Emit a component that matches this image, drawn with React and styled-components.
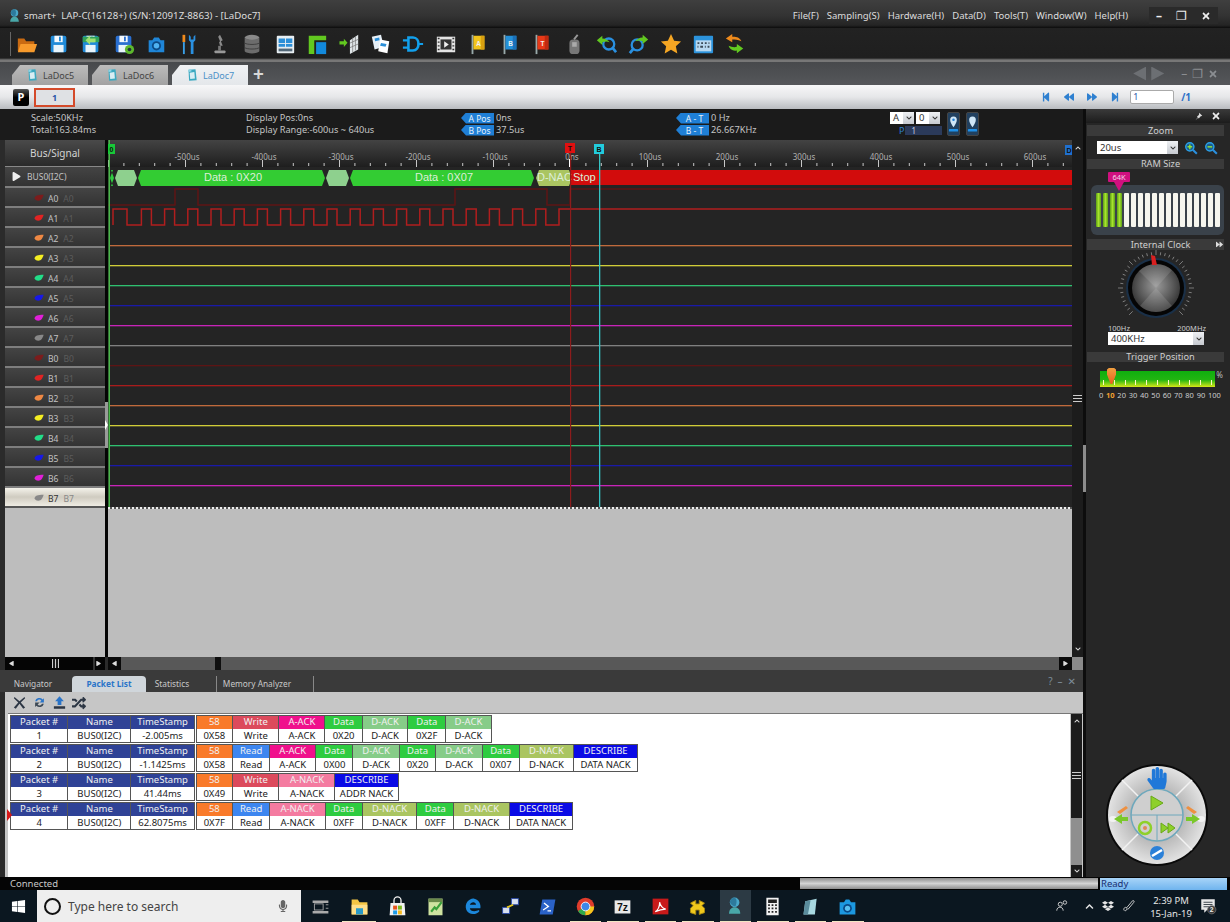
import React from "react";
import styled, { createGlobalStyle } from "styled-components";
import { FaWindows, FaMicrophone, FaDropbox, FaChevronUp, FaChevronDown, FaHandPaper, FaRandom, FaTimes, FaPlay, FaStepBackward, FaStepForward, FaBackward, FaForward } from "react-icons/fa";

const Global = createGlobalStyle`
  html, body { margin: 0; padding: 0; background: #000; }
  * { box-sizing: border-box; }
  body { font-family: "Noto Sans", "DejaVu Sans", sans-serif; font-size: 10px; }
`;

const Page = styled.div`
  width: 1230px;
  height: 922px;
  display: flex;
  flex-direction: column;
  overflow: hidden;
  background: #262626;
  color: #ccc;
`;

/* title + menu */
const TitleBar = styled.div`
  height: 28px;
  flex: none;
  display: flex;
  align-items: center;
  padding: 3px 12px 0 7px;
  background: linear-gradient(#3f3f3f, #333 55%, #242424 90%, #0c0c0c);
`;
const TitleText = styled.div`
  margin-left: 2px;
  color: #ddd;
  font-size: 9.7px;
  white-space: nowrap;
`;
const Menu = styled.div`
  margin-left: auto;
  display: flex;
  gap: 8px;
  color: #ddd;
  font-size: 9.5px;
`;
const WinButtons = styled.div`
  margin-left: 21px;
  width: 69px;
  height: 17px;
  display: flex;
  align-items: center;
  justify-content: space-around;
  background: #2a2a2a;
  color: #eee;
  font-weight: 700;
  font-size: 12px;
`;

const Toolbar = styled.div`
  height: 34px;
  flex: none;
  display: flex;
  align-items: center;
  padding-left: 10px;
  background: linear-gradient(#222 0, #1f1f1f 30px, #777 32px, #777 34px);
`;
const ToolSep = styled.div`
  width: 1px;
  height: 24px;
  margin-bottom: 2px;
  background: #666;
`;
const ToolCell = styled.div`
  width: 32.2px;
  display: flex;
  justify-content: center;
  margin-bottom: 3px;
`;

const TabBar = styled.div`
  height: 23px;
  flex: none;
  display: flex;
  align-items: flex-end;
  padding: 0 12px 0 12px;
  gap: 4px;
  background: linear-gradient(#47494c, #55575a);
`;
const DocTab = styled.div`
  width: 76px;
  height: 20px;
  display: flex;
  align-items: center;
  padding-left: 13px;
  gap: 4px;
  clip-path: polygon(8px 0, 100% 0, 100% 100%, 0 100%, 0 10px);
  background: ${(p) => (p.$active ? "linear-gradient(#f0f2f4,#e4e7ea)" : "linear-gradient(#bcbcbc,#a2a2a2)")};
  color: ${(p) => (p.$active ? "#4a90c8" : "#444")};
  font-size: 9px;
`;
const AddTab = styled.div`
  margin: 0 0 1px 1px;
  color: #d8d8d8;
  font-size: 19px;
  line-height: 20px;
  font-weight: 700;
`;
const TabTools = styled.div`
  margin-left: auto;
  align-self: center;
  display: flex;
  align-items: center;
  gap: 5px;
  color: #8b8e92;
  font-size: 12px;
`;
const TabNavTri = styled.span`
  width: 13px;
  height: 14px;
  background: #6c6f73;
  clip-path: ${(p) =>
    p.$right ? "polygon(0 0, 100% 50%, 0 100%)" : "polygon(100% 0, 0 50%, 100% 100%)"};
`;
const TabMin = styled.span`
  margin-left: 12px;
`;

const PageBar = styled.div`
  height: 24px;
  flex: none;
  display: flex;
  align-items: center;
  padding: 0 39px 0 13px;
  background: linear-gradient(#f7f7f8, #e6e7e9 50%, #b9bcc0);
`;
const PButton = styled.div`
  width: 16px;
  height: 17px;
  border-radius: 2px;
  background: linear-gradient(#555, #000 50%);
  color: #fff;
  font-weight: 700;
  font-size: 11px;
  text-align: center;
  line-height: 16px;
`;
const PageChip = styled.div`
  width: 41px;
  height: 19px;
  margin-left: 5px;
  border: 2px solid #d44a2a;
  background: #dfe1e4;
  color: #2a55a8;
  font-size: 9px;
  font-weight: 700;
  text-align: center;
  line-height: 15px;
`;
const PageNav = styled.div`
  margin-left: auto;
  display: flex;
  align-items: center;
  gap: 13px;
  margin-right: 10px;
  color: #2f80d0;
`;
const PageInput = styled.div`
  width: 44px;
  height: 14px;
  padding-left: 2px;
  border-radius: 2px;
  background: #fff;
  border: 1px solid #aaa;
  color: #2a55a8;
  font-size: 9px;
  line-height: 12px;
`;
const PageTotal = styled.div`
  margin-left: 7px;
  color: #2f70c8;
  font-size: 10px;
  font-weight: 700;
`;

/* main */
const Body = styled.div`
  flex: 1;
  min-height: 0;
  display: flex;
`;
const LeftCol = styled.div`
  width: 1083px;
  display: flex;
  flex-direction: column;
`;

const InfoBar = styled.div`
  height: 31px;
  flex: none;
  display: grid;
  grid-template-columns: 215px 215px 215px 214px auto;
  padding: 3px 0 0 31px;
  background: #1b1b1b;
  color: #c4c4c4;
  font-size: 9.2px;
  line-height: 12px;
`;
const InfoBadgeRow = styled.div`
  display: flex;
  align-items: center;
  height: 12px;
  gap: 2px;
`;
const InfoBadge = styled.div`
  width: 33px;
  height: 11px;
  padding-left: 4px;
  text-align: center;
  background: #1f7fd6;
  color: #e8f2fb;
  font-size: 8.5px;
  line-height: 11px;
  clip-path: polygon(0 50%, 5px 0, 100% 0, 100% 100%, 5px 100%);
`;
const Probe = styled.div`
  display: grid;
  grid-template-columns: auto auto;
  column-gap: 5px;
  justify-content: start;
`;
const ProbeSelects = styled.div`
  display: flex;
  flex-direction: column;
  gap: 2px;
`;
const ProbeRow = styled.div`
  display: flex;
  gap: 2px;
  align-items: center;
`;
const ProbeP = styled.div`
  margin-left: 9px;
  display: flex;
  align-items: center;
  gap: 1px;
  color: #2f80d0;
  font-size: 9px;
  line-height: 9px;
`;
const ProbeField = styled.div`
  width: 37px;
  height: 9px;
  padding-left: 6px;
  background: #2b3a5a;
  color: #c9d2e0;
  font-size: 8px;
  line-height: 9px;
`;
const ProbeButton = styled.div`
  width: 13px;
  height: 24px;
  display: flex;
  justify-content: center;
  align-items: center;
  margin-right: 6px;
  border-radius: 2px;
  background: #21405f;
  border: 1px solid #444;
`;
const ProbeButtons = styled.div`
  display: flex;
`;
const Select = styled.div`
  width: ${(p) => p.$w}px;
  height: ${(p) => p.$h || 13}px;
  display: flex;
  align-items: center;
  justify-content: space-between;
  background: #fff;
  color: #333;
  font-size: 9.5px;
  padding-left: 3px;
`;
const SelectArrow = styled.span`
  width: 11px;
  height: 100%;
  display: flex;
  align-items: center;
  justify-content: center;
  background: linear-gradient(#eef0f3, #c6cad0);
  color: #333;
`;

const Scope = styled.div`
  height: 517px;
  flex: none;
  display: flex;
  background: #bdbdbd;
`;
const SideCol = styled.div`
  width: 105px;
  flex: none;
  padding-left: 5px;
  background: linear-gradient(90deg, #2b2b2b 5px, #bdbdbd 5px);
  display: flex;
  flex-direction: column;
`;
const SideHead = styled.div`
  height: 27px;
  display: flex;
  align-items: center;
  justify-content: center;
  border-bottom: 1px solid #888;
  background: linear-gradient(#4a4a4a, #2a2a2a);
  color: #d4d4d4;
  font-size: 10px;
`;
const SideRow = styled.div`
  height: ${(p) => (p.$bus ? 21 : 20)}px;
  flex: none;
  display: flex;
  align-items: center;
  padding-left: ${(p) => (p.$bus ? 7 : 29)}px;
  padding-top: ${(p) => (p.$bus ? 0 : 3)}px;
  gap: ${(p) => (p.$bus ? 6 : 3)}px;
  border-bottom: 2px solid ${(p) => (p.$active ? "#555" : "#7e7e7e")};
  background: ${(p) =>
    p.$active ? "linear-gradient(#f4f2ea,#cfcbc0 50%,#efece3)" : "linear-gradient(#444,#333)"};
  color: ${(p) => (p.$active ? "#333" : "#c2c2c2")};
  font-size: 8.5px;
`;
const SideDim = styled.span`
  color: ${(p) => (p.$active ? "#888" : "#5c5c5c")};
  margin-left: 2px;
`;
const SideSplit = styled.div`
  position: relative;
  width: 3px;
  flex: none;
  background: #050505;
`;
const SplitHandle = styled.div`
  position: absolute;
  left: 0;
  top: 262px;
  width: 3px;
  height: 46px;
  background: #9a9a9a;
  &::after {
    content: "";
    position: absolute;
    top: 18px;
    left: 0;
    border-left: 3px solid #fff;
    border-top: 5px solid transparent;
    border-bottom: 5px solid transparent;
  }
`;
const CanvasCol = styled.div`
  width: 964px;
  flex: none;
  display: flex;
  flex-direction: column;
`;
const DottedEdge = styled.div`
  height: 2px;
  flex: none;
  background: repeating-linear-gradient(90deg, #eee 0 2px, #555 2px 4px);
`;
const Wave = styled.svg`
  display: block;
  flex: none;
`;
const RulerText = styled.text`
  fill: #b0b0b0;
  font-size: 8px;
  font-family: "Noto Sans", sans-serif;
  text-anchor: middle;
`;
const BusText = styled.text`
  fill: #dcefd8;
  font-size: 11px;
  font-family: "Liberation Sans", sans-serif;
  text-anchor: ${(p) => p.$anchor || "middle"};
`;
const FlagText = styled.text`
  fill: ${(p) => p.$fill || "#111"};
  font-size: ${(p) => p.$size || 7}px;
  font-weight: 700;
  font-family: "Liberation Sans", sans-serif;
  text-anchor: middle;
`;
const VScroll = styled.div`
  width: 11px;
  flex: none;
  display: flex;
  flex-direction: column;
  align-items: center;
  justify-content: space-between;
  padding: 5px 0;
  background: #1c1c1c;
  color: #ddd;
`;
const GripLines = styled.div`
  width: 9px;
  height: 7px;
  border-top: 1px solid #ccc;
  border-bottom: 1px solid #ccc;
  background: linear-gradient(#1c1c1c 2px, #ccc 2px, #ccc 3px, #1c1c1c 3px);
`;
const HGrip = styled(GripLines)`
  transform: rotate(90deg);
`;
const LeftTri = styled(FaPlay)`
  transform: scaleX(-1);
`;
const HScrollRow = styled.div`
  height: 13px;
  flex: none;
  display: flex;
  background: #2b2b2b;
`;
const HLeft = styled.div`
  width: 100px;
  margin-left: 5px;
  display: flex;
  justify-content: space-between;
  align-items: center;
  padding: 0 4px;
  background: linear-gradient(90deg, #050505 88px, #333 88px, #333 90px, #050505 90px);
  color: #ddd;
`;
const HTrack = styled.div`
  width: 964px;
  margin-left: 3px;
  display: flex;
  align-items: center;
  background: #585858;
`;
const HArrow = styled.div`
  width: 13px;
  height: 100%;
  display: flex;
  align-items: center;
  justify-content: center;
  background: #0a0a0a;
  color: #ddd;
`;
const HKnob = styled.div`
  width: 6px;
  height: 100%;
  margin-left: 94px;
  background: #0f0f0f;
`;
const HSpace = styled.div`
  flex: 1;
`;
const HEnd = styled.div`
  flex: 1;
  background: #8a8a8a;
`;

/* bottom panel */
const Bottom = styled.div`
  flex: 1;
  display: flex;
  flex-direction: column;
  background: linear-gradient(90deg, #2b2b2b 5px, #c6c6c6 5px);
`;
const BottomTabs = styled.div`
  height: 22px;
  flex: none;
  display: flex;
  align-items: flex-end;
  padding-left: 5px;
  background: #3a3a3a;
`;
const BottomTab = styled.div`
  width: ${(p) => p.$w}px;
  height: 16px;
  padding-right: ${(p) => p.$pr || 0}px;
  text-align: center;
  font-size: 8.3px;
  line-height: 15px;
  border-right: ${(p) => (p.$sep ? "1px solid #888" : "none")};
  border-radius: ${(p) => (p.$active ? "4px 4px 0 0" : "0")};
  background: ${(p) => (p.$active ? "#d0d6db" : "transparent")};
  color: ${(p) => (p.$active ? "#2a74c8" : "#c8c8c8")};
  font-weight: ${(p) => (p.$active ? 700 : 400)};
`;
const PanelTools = styled.div`
  margin-left: auto;
  align-self: center;
  display: flex;
  gap: 5px;
  padding-right: 7px;
  color: #7d8d99;
  font-size: 10px;
`;
const BottomTools = styled.div`
  height: 21px;
  flex: none;
  display: flex;
  align-items: center;
  gap: 5px;
  padding-left: 12px;
  color: #2c3644;
`;
const ListFrame = styled.div`
  flex: 1;
  min-height: 0;
  display: flex;
  margin-left: 8px;
  border-top: 1px solid #777;
`;
const PacketList = styled.div`
  position: relative;
  flex: 1;
  display: flex;
  flex-direction: column;
  gap: 1px;
  padding: 1px 0 0 2px;
  background: #fff;
`;
const PacketRow = styled.div`
  display: flex;
  gap: 1px;
`;
const PacketTable = styled.div`
  display: flex;
  border: 1px solid #555;
  border-width: 1px 0 1px 1px;
`;
const PacketCol = styled.div`
  width: ${(p) => p.$w}px;
  border-right: 1px solid #555;
`;
const HeadCell = styled.div`
  height: 13px;
  text-align: center;
  font-size: 9.5px;
  line-height: 12px;
  color: #f0f0f0;
  background: ${(p) => p.$bg};
  white-space: nowrap;
  overflow: hidden;
`;
const ValueCell = styled.div`
  height: 13px;
  text-align: center;
  font-size: 9.5px;
  line-height: 13px;
  color: #222;
  background: #fff;
  white-space: nowrap;
  overflow: hidden;
`;
const RowFlag = styled.div`
  position: absolute;
  left: -1px;
  top: 95px;
  border-left: 5px solid #d81818;
  border-top: 6px solid transparent;
  border-bottom: 6px solid transparent;
`;
const ListScroll = styled.div`
  width: 13px;
  flex: none;
  display: flex;
  flex-direction: column;
  padding: 0 1px;
  background: #c6c6c6;
`;
const ListThumb = styled.div`
  height: 104px;
  padding-top: 4px;
  display: flex;
  flex-direction: column;
  align-items: center;
  gap: 48px;
  background: #1c1c1c;
  color: #ddd;
`;
const ListTrack = styled.div`
  flex: 1;
  background: #8f8f8f;
`;
const ListEnd = styled.div`
  height: 12px;
  display: flex;
  justify-content: center;
  align-items: center;
  background: #1c1c1c;
  color: #ddd;
`;

/* right panel */
const RightPanel = styled.div`
  width: 147px;
  flex: none;
  display: flex;
  flex-direction: column;
  border-left: 3px solid #0d0d0d;
  background: #262626;
  position: relative;
`;
const PanelGrip = styled.div`
  position: absolute;
  left: -3px;
  top: 336px;
  width: 3px;
  height: 47px;
  background: #8c8c8c;
`;
const PanelHead = styled.div`
  height: 14px;
  flex: none;
  display: flex;
  align-items: center;
  justify-content: flex-end;
  gap: 8px;
  padding-right: 9px;
  background: linear-gradient(#3a3a3a, #1c1c1c);
  color: #eee;
`;
const SectionTitle = styled.div`
  height: ${(p) => p.$h || 10}px;
  margin: ${(p) => p.$mt}px 6px 0 1px;
  padding-left: 10px;
  flex: none;
  position: relative;
  background: #3a3a3a;
  color: #d0d0d0;
  font-size: 9.2px;
  line-height: ${(p) => p.$h || 10}px;
  text-align: center;
`;
const TitleArrow = styled.span`
  position: absolute;
  right: 1px;
  top: 0;
  display: flex;
  height: 100%;
  align-items: center;
  color: #ddd;
`;
const ZoomRow = styled.div`
  height: 13px;
  flex: none;
  margin: 5px 0 0 11px;
  display: flex;
  align-items: center;
  gap: 6px;
`;
const RamBox = styled.div`
  position: relative;
  width: 133px;
  height: 50px;
  flex: none;
  margin: 16px 0 0 5px;
  padding: 8px 5px;
  display: flex;
  gap: 2px;
  border-radius: 6px;
  background: #3a424a;
`;
const RamBar = styled.div`
  width: 5px;
  flex: none;
  border-radius: 1px;
  background: ${(p) => (p.$on ? "linear-gradient(90deg,#5da016,#a6e22e,#5da016)" : "#f6f6ee")};
`;
const RamBadge = styled.div`
  position: absolute;
  top: -13px;
  left: 17px;
  width: 22px;
  height: 10px;
  border-radius: 1px;
  background: #d0107f;
  color: #f5d5e8;
  font-size: 7.5px;
  line-height: 10px;
  text-align: center;
  &::after {
    content: "";
    position: absolute;
    top: 10px;
    left: 6px;
    border-top: 9px solid #d0107f;
    border-left: 5px solid transparent;
    border-right: 5px solid transparent;
  }
`;
const KnobWrap = styled.div`
  height: 74px;
  flex: none;
  padding-left: 28px;
`;
const KnobLabels = styled.div`
  width: 98px;
  height: 8px;
  margin-left: 22px;
  display: flex;
  justify-content: space-between;
  color: #ccc;
  font-size: 7.5px;
  line-height: 8px;
`;
const ClockSelect = styled.div`
  margin-left: 22px;
`;
const TriggerBar = styled.div`
  position: relative;
  width: 115px;
  height: 16px;
  flex: none;
  margin: 9px 0 0 14px;
  display: flex;
  align-items: flex-end;
  justify-content: space-between;
  padding: 0 3px 2px;
  background: linear-gradient(#0fae0f, #22b511 55%, #d8e818);
`;
const TriggerTick = styled.span`
  width: 1px;
  height: 5px;
  background: #fff8c0;
`;
const TriggerMark = styled.div`
  position: absolute;
  left: 7px;
  top: -3px;
  width: 9px;
  height: 16px;
  background: linear-gradient(#f0a040, #e8601c);
  clip-path: polygon(0 10%, 20% 0, 80% 0, 100% 10%, 100% 40%, 60% 100%, 40% 100%, 0 40%);
`;
const TriggerPct = styled.span`
  position: absolute;
  right: -8px;
  top: -2px;
  color: #bbb;
  font-size: 8px;
`;
const TriggerScale = styled.div`
  width: 122px;
  margin: 2px 0 0 13px;
  display: flex;
  justify-content: space-between;
  font-size: 7.5px;
  line-height: 12px;
  color: #ccc;
`;
const TriggerNum = styled.span`
  color: ${(p) => (p.$hot ? "#f0a030" : "#ccc")};
  font-weight: ${(p) => (p.$hot ? 700 : 400)};
`;
const WheelWrap = styled.div`
  margin: auto 0 10px 19px;
  height: 104px;
  flex: none;
`;

/* status + taskbar */
const StatusBar = styled.div`
  height: 13px;
  flex: none;
  display: flex;
  align-items: center;
  padding-left: 10px;
  background: #050505;
  color: #c8c8c8;
  font-size: 9.5px;
`;
const Progress = styled.div`
  width: 298px;
  height: 11px;
  margin-left: auto;
  background: linear-gradient(#8e8e8e, #d4d4d4 50%, #8e8e8e);
`;
const ReadyBox = styled.div`
  width: 127px;
  height: 12px;
  margin: 0 3px 0 2px;
  padding-left: 1px;
  background: linear-gradient(#a8d4f8, #6fb4ee);
  color: #1a2f70;
  font-size: 9.5px;
  line-height: 12px;
`;
const Taskbar = styled.div`
  height: 32px;
  flex: none;
  display: flex;
  align-items: center;
  background: #0b1720;
  color: #e8e8e8;
`;
const StartButton = styled.div`
  width: 37px;
  display: flex;
  justify-content: center;
  color: #fff;
`;
const SearchBox = styled.div`
  width: 264px;
  height: 32px;
  display: flex;
  align-items: center;
  padding: 0 12px 0 7px;
  background: #eeeeee;
  color: #444;
  font-size: 12px;
`;
const SearchRing = styled.span`
  width: 17px;
  height: 17px;
  margin-right: 7px;
  border-radius: 50%;
  border: 2.5px solid #111;
`;
const SearchMic = styled.span`
  margin-left: auto;
  display: flex;
  color: #666;
`;
const TaskIcon = styled.div`
  width: ${(p) => p.$w || 37.5}px;
  height: 32px;
  flex: none;
  display: flex;
  align-items: center;
  justify-content: center;
  background: ${(p) => (p.$active ? "#2c3a44" : "transparent")};
  box-shadow: ${(p) => (p.$open ? "inset 0 -1px 0 0 #f2e6c4" : "none")};
  background-clip: padding-box;
  border-left: 3px solid transparent;
  border-right: 3px solid transparent;
`;
const Tray = styled.div`
  margin-left: auto;
  display: flex;
  align-items: center;
  gap: 8px;
  padding-right: 13px;
  color: #e6e6e6;
`;
const TrayPerson = styled.span`
  display: flex;
  margin-right: 8px;
`;
const Clock = styled.div`
  width: 52px;
  margin: 2px -6px 0 1px;
  text-align: center;
  font-size: 9.5px;
  line-height: 13px;
`;

/* ---- drawn icons ---- */
const Ico = ({ s = 24, children, vb = "0 0 24 24" }) => (
  <svg width={s} height={s} viewBox={vb}>{children}</svg>
);
const Floppy = ({ extra, c = "#1f8ad8" }) => (
  <>
    <rect x="3" y="3" width="17" height="18" rx="2" fill={c} />
    <rect x="7" y="3" width="9" height="7" fill="#f4f8fb" />
    <rect x="12" y="4" width="2" height="5" fill={c} />
    <rect x="6" y="13" width="11" height="8" fill="#e8f4fb" />
    {extra}
  </>
);
const FlagIcon = ({ c, dark, l, pole = "#9aa" }) => (
  <>
    <rect x="5" y="2" width="2" height="21" fill={pole} />
    <path d={`M7 3h12v15H7z`} fill={c} />
    <path d="M15 3h4v15h-4z" fill={dark} />
    <FlagText x="12.5" y="14" $fill="#f0f0f0">{l}</FlagText>
  </>
);
const toolIcons = [
  <><path d="M2 20V6h7l2 3h9v3H7L4 20z" fill="#c96a12" /><path d="M5 12h18l-3 9H2z" fill="#f79a2c" /></>,
  <Floppy />,
  <Floppy extra={<><path d="M3 4h18v6H3z" fill="#2fa05a" /><path d="M6 8l5-5v3h6v4h-6v3z" fill="#9fe070" /></>} c="#1f8ad8" />,
  <Floppy c="#2a6fd0" extra={<><circle cx="18" cy="18" r="5" fill="#5db82c" /><circle cx="18" cy="18" r="2" fill="#20303a" /></>} />,
  <><path d="M4 8h4l2-3h5l2 3h4v13H4z" fill="#1f86d8" /><circle cx="12.5" cy="14" r="5" fill="#0c4a86" /><circle cx="12.5" cy="14" r="3" fill="#4fb2f2" /></>,
  <><rect x="6" y="2" width="3" height="8" fill="#f08a1c" /><rect x="6.5" y="10" width="2" height="13" fill="#3aa0e8" /><path d="M13 2v6l2 2v13h3V10l2-2V2l-2 2v3h-3V4z" fill="#2a90e0" /></>,
  <><path d="M12 2l3 6-2 1 2 5h-3l-1-4 1-1-2-5z" fill="#8a8a8a" /><rect x="10" y="14" width="3" height="5" fill="#777" /><rect x="6" y="19" width="12" height="3" rx="1" fill="#999" /></>,
  <><ellipse cx="12" cy="5" rx="8" ry="3" fill="#8a8a8a" /><path d="M4 5v15c2 3 14 3 16 0V5c-2 3-14 3-16 0z" fill="#6c6c6c" /><path d="M4 11c3 2 13 2 16 0M4 16c3 2 13 2 16 0" stroke="#3c3c3c" fill="none" /></>,
  <><rect x="3" y="3" width="19" height="19" rx="1" fill="#e7eef2" /><rect x="5" y="6" width="7" height="5" fill="#2c8fd8" /><rect x="13" y="6" width="7" height="5" fill="#2c8fd8" /><rect x="5" y="12" width="7" height="3" fill="#2c8fd8" /><rect x="13" y="12" width="7" height="3" fill="#2c8fd8" /><rect x="5" y="17" width="15" height="3" fill="#536878" /></>,
  <><path d="M3 3h19v5H9v15H3z" fill="#62c820" /><rect x="11" y="10" width="11" height="13" fill="#1289dc" /></>,
  <><path d="M2 11h6V8l5 5-5 5v-3H2z" fill="#62c820" transform="translate(0 -1) scale(.8 .9)" /><path d="M13 8l9-6v16l-9 5z" fill="#dfe5e8" /><path d="M16 5v16M19 4v15M13 11l9-4M13 16l9-4" stroke="#777" fill="none" strokeWidth=".8" /></>,
  <><path d="M2 4l10-2 3 13-10 3z" fill="#e6f0f8" /><path d="M11 7l10 2-2 13-10-2z" fill="#fff" /><path d="M12 11l6 1-1 3-6-1z" fill="#2c8fd8" /><path d="M5 6l5-1 .5 3-5 1z" fill="#2c8fd8" /></>,
  <><path d="M1 8h6M1 16h6M17 12h6" stroke="#12a0ec" strokeWidth="2.4" /><path d="M7 5h5c8 0 8 14 0 14H7z" fill="none" stroke="#12a0ec" strokeWidth="2.8" /></>,
  <><rect x="2" y="4" width="20" height="17" fill="#e4e4e4" /><rect x="6" y="7" width="12" height="11" fill="#333" /><path d="M10 9l5 3.5-5 3.5z" fill="#eee" /><path d="M3 6h2M3 10h2M3 14h2M3 18h2M19 6h2M19 10h2M19 14h2M19 18h2" stroke="#333" strokeWidth="1.4" /></>,
  <FlagIcon c="#f2c41c" dark="#d8a010" l="A" />,
  <FlagIcon c="#2490d8" dark="#1a70b8" l="B" />,
  <FlagIcon c="#e83a18" dark="#c02a10" l="T" />,
  <><rect x="7" y="7" width="11" height="16" rx="4" fill="#777" /><rect x="10" y="10" width="5" height="5" fill="#aaa" /><path d="M12 7l4-5" stroke="#999" strokeWidth="2" /></>,
  <><circle cx="15" cy="12" r="6" fill="none" stroke="#2a90e0" strokeWidth="2.5" /><path d="M19 16l4 5" stroke="#2a90e0" strokeWidth="3" /><path d="M2 8l6-5v3c4 0 6 2 8 4-3-1-5-1-8 0v3z" fill="#62c820" /></>,
  <><circle cx="10" cy="13" r="6" fill="none" stroke="#2a90e0" strokeWidth="2.5" /><path d="M6 17l-4 5" stroke="#2a90e0" strokeWidth="3" /><path d="M22 7l-6-5v3c-4 0-6 2-8 4 3-1 5-1 8 0v3z" fill="#62c820" /></>,
  <path d="M12 1l3.4 7.4 7.6.8-5.7 5.2 1.6 8-6.9-4.1L5.100 22.400l1.600-8L1 9.200l7.600-.8z" fill="#f5a623" />,
  <><rect x="2" y="3" width="21" height="19" rx="1" fill="#2c93dc" /><rect x="4" y="8" width="17" height="12" fill="#b8d8f0" /><path d="M6 11h2M10 11h2M14 11h2M18 11h1M6 15h1M9 15h3M14 15h1M17 15h2" stroke="#3a4a58" strokeWidth="2" /></>,
  <><path d="M5 9c2-5 7-5 10-5V1l7 5-7 4V7c-3 0-6 0-10 2z" fill="#ee8a1c" transform="matrix(-1 0 0 1 24 0)" /><path d="M5 14c3 1 6 2 9 1v-3l7 5-7 5v-3c-4 1-8-1-9-5z" fill="#62c820" /></>,
];

const AppLogo = ({ s = 16 }) => (
  <Ico s={s}>
    <circle cx="12" cy="8" r="6" fill="#49a7c8" />
    <path d="M12 2c3 2 3 6 1 11-4 0-7-4-7-6 1-3 4-5 6-5z" fill="#2d7a9c" />
    <path d="M5 22c0-5 3-8 7-8s7 3 7 8z" fill="#49a7a8" />
  </Ico>
);
const DocIcon = () => (
  <Ico s={14}>
    <path d="M6 3l12-1 2 19-13 1z" fill="#3aa8c0" />
    <path d="M8 8l8-1 1 11-8 1z" fill="#d8eef4" />
    <path d="M6 3l5-1v4l-5 1z" fill="#8ed4e4" />
  </Ico>
);
const ZoomLens = ({ plus }) => (
  <Ico s={14}>
    <circle cx="10" cy="10" r="7" fill="#1c5d8c" stroke="#2aa0e8" strokeWidth="2.5" />
    <path d="M15 15l7 7" stroke="#2a90e0" strokeWidth="3.500" />
    <path d={plus ? "M6 10h8M10 6v8" : "M6 10h8"} stroke="#8fe03a" strokeWidth="2.500" />
  </Ico>
);
const Leaf = ({ c }) => (
  <Ico s={11}>
    <path d="M1 12c1-6 7-8 20-8-2 7-5 13-12 13-3 0-6-2-8-5z" fill={c} />
  </Ico>
);
const PinBtn = ({ solid }) => (
  <Ico s={20} vb="0 0 13 24">
    <path d="M6.500 3c3 0 4 2 4 4 0 3-2 6-4 9-2-3-4-6-4-9 0-2 1-4 4-4z" fill="#cfe6f7" />
    {!solid && <circle cx="6.500" cy="7" r="1.500" fill="#1f7fd6" />}
    <rect x="1" y="18" width="11" height="3" rx="1" fill="#1f90e8" />
  </Ico>
);

const channelColors = ["#5d1414", "#a81c1c", "#c06a3c", "#d0cc38", "#2fc070", "#1a1aa8", "#c824b8", "#808080"];
const leafColors = ["#7c1c1c", "#e02424", "#ee8844", "#f4ee22", "#22dd88", "#1818e8", "#e020d8", "#888888"];
const channels = ["A", "B"].flatMap((b) =>
  [0, 1, 2, 3, 4, 5, 6, 7].map((i) => ({ name: `${b}${i}`, wave: channelColors[i], leaf: leafColors[i] }))
);

const SX = 108;
const tickXs = Array.from({ length: 81 }, (_, i) => 108 + i * 15.4).filter((x) => x < 1072);
const labels = [
  ["-500us", 187], ["-400us", 264], ["-300us", 341], ["-200us", 418], ["-100us", 495], ["0ns", 572],
  ["100us", 650], ["200us", 727], ["300us", 804], ["400us", 881], ["500us", 958], ["600us", 1035],
];

const a1Path = () => {
  let d = "M113 225V209H127V225";
  for (let x = 141.4; x < 558; x += 23.2) {
    d += `H${x.toFixed(1)}V209H${(x + 10).toFixed(1)}V225`;
  }
  return d + "H559V209H1072";
};
const hex = (a, b) => `${a},178 ${a + 3},170 ${b - 3},170 ${b},178 ${b - 3},186 ${a + 3},186`;

const Waveform = () => (
  <Wave width="964" height="367" viewBox={`${SX} 140 964 367`}>
    <defs>
      <linearGradient id="ruler" x1="0" y1="0" x2="0" y2="1">
        <stop offset="0" stopColor="#434343" />
        <stop offset="1" stopColor="#1e1e1e" />
      </linearGradient>
    </defs>
    <rect x="108" y="140" width="964" height="367" fill="#242424" />
    <rect x="108" y="140" width="964" height="27" fill="url(#ruler)" />
    {tickXs.map((x, i) => (
      <rect key={i} x={x} y={i % 5 === 0 ? 160 : 163} width="1" height={i % 5 === 0 ? 7 : 3} fill="#c8c8c8" />
    ))}
    <rect x="569" y="159" width="2" height="8" fill="#fff" />
    {labels.map(([t, x]) => <RulerText key={t} x={x} y="160">{t}</RulerText>)}

    <polygon points={hex(110, 114)} fill="#2ecc40" />
    <polygon points={hex(115, 137)} fill="#8ed08e" />
    <polygon points={hex(138, 325)} fill="#33cc33" />
    <polygon points={hex(326, 349)} fill="#8ed08e" />
    <polygon points={hex(350, 534)} fill="#33cc33" />
    <polygon points={hex(536, 572)} fill="#aac561" />
    <rect x="570" y="170" width="502" height="15" fill="#d20c0c" />
    <BusText x="233" y="181">Data : 0X20</BusText>
    <BusText x="444" y="181">Data : 0X07</BusText>
    <BusText x="537" y="181" $anchor="start">D-NAC</BusText>
    <BusText x="573" y="181" $anchor="start">Stop</BusText>

    <path d="M108 205H175V189H198V205H455V189H547V205H570V189H1072" fill="none" stroke="#5d1414" strokeWidth="1.5" />
    <path d={a1Path()} fill="none" stroke="#b01e1e" strokeWidth="1.5" />
    {channels.slice(2, 15).map((c, i) => (
      <rect key={c.name} x="109" y={245 + i * 20} width="963" height="1.300" fill={c.wave} />
    ))}

    <rect x="108.500" y="140" width="1.500" height="367" fill="#4ab84a" />
    <rect x="570" y="153" width="1.200" height="354" fill="#8c1c1c" />
    <rect x="599" y="154" width="1.300" height="353" fill="#35c4c4" />

    <rect x="108" y="144" width="7" height="10" fill="#18c838" />
    <FlagText x="111.500" y="152">0</FlagText>
    <rect x="565" y="143" width="10" height="10" fill="#e01010" />
    <FlagText x="570" y="151">T</FlagText>
    <rect x="594" y="144" width="10" height="10" fill="#22ccdd" />
    <FlagText x="599" y="152">B</FlagText>
    <rect x="1065" y="145" width="7" height="10" fill="#1f70d0" />
    <FlagText x="1069" y="153">D</FlagText>
  </Wave>
);

const Knob = () => {
  const ticks = Array.from({ length: 37 }, (_, i) => -135 + i * 7.5);
  return (
    <svg width="84" height="78" viewBox="0 0 84 78">
      <defs>
        <radialGradient id="metal" cx="50%" cy="45%" r="62%">
          <stop offset="0" stopColor="#9a9a9a" />
          <stop offset="0.55" stopColor="#5c5c5c" />
          <stop offset="1" stopColor="#262626" />
        </radialGradient>
      </defs>
      {ticks.map((a) => (
        <line key={a} x1="42" y1="5" x2="42" y2={a % 45 === 0 ? 0 : 2} stroke="#8c8c8c" strokeWidth=".8" transform={`rotate(${a} 42 38)`} />
      ))}
      <circle cx="42" cy="38" r="30" fill="#1a3048" />
      <circle cx="42" cy="38" r="28" fill="#050505" />
      <circle cx="42" cy="38" r="24" fill="url(#metal)" />
      <path d="M42 38L25 21A24 24 0 0158 20zM42 38L58 56A24 24 0 0126 56z" fill="#c8c8c8" fillOpacity=".18" />
      <path d="M37 5l4 1 2 9-5 0z" fill="#d82020" />
    </svg>
  );
};

const Wheel = () => (
  <svg width="104" height="104" viewBox="0 0 104 104">
    <defs>
      <radialGradient id="disc" cx="50%" cy="50%" r="52%">
        <stop offset="0.5" stopColor="#b8b8b8" />
        <stop offset="1" stopColor="#e6e6e6" />
      </radialGradient>
    </defs>
    <circle cx="52" cy="52" r="51" fill="#0a0a0a" />
    <circle cx="52" cy="52" r="49" fill="url(#disc)" />
    <path d="M17 17L34 34M87 17L70 34M17 87L34 70M87 87L70 70" stroke="#f2f2f2" strokeWidth="1.500" />
    <circle cx="52" cy="52" r="26" fill="#cfcfcf" stroke="#6ea8bc" strokeWidth="1.500" />
    <path d="M26 52H78M52 52V78" stroke="#6ea8bc" strokeWidth="1" />
    <path d="M46 33l12 7-12 7z" fill="#8ed02a" stroke="#68a818" />
    <path d="M56 60l7 5-7 5zM63 60l7 5-7 5z" fill="#8ed02a" stroke="#68a818" />
    <circle cx="40" cy="65" r="6" fill="none" stroke="#8ed02a" strokeWidth="2.500" />
    <circle cx="40" cy="65" r="2" fill="#e08858" />
    <circle cx="52" cy="90" r="7" fill="#2a80d8" />
    <path d="M47 93l10-6" stroke="#fff" strokeWidth="2.500" />
    <FaHandPaper x="41" y="4" size="22" color="#1f78d8" />
    <ellipse cx="8" cy="56" rx="4" ry="3" fill="#f2f2f2" />
    <path d="M9 56l8-5v3h6v4h-6v3z" fill="#7ac82a" />
    <path d="M12 49l9-6 2 2-8 6z" fill="#ee9040" />
    <ellipse cx="96" cy="56" rx="4" ry="3" fill="#f2f2f2" />
    <path d="M95 56l-8-5v3h-6v4h6v3z" fill="#7ac82a" />
    <path d="M92 49l-9-6-2 2 8 6z" fill="#ee9040" />
  </svg>
);

const LEFT_HEAD = "#2f4296";
const kinds = {
  addr: { head: "58", bg: "#f97a2a" },
  write: { head: "Write", bg: "#dc4a5c" },
  read: { head: "Read", bg: "#3d86f0" },
  aack: { head: "A-ACK", bg: "#f0108c" },
  anack: { head: "A-NACK", bg: "#f47ba0" },
  data: { head: "Data", bg: "#2ecc40" },
  dack: { head: "D-ACK", bg: "#86cc88" },
  dnack: { head: "D-NACK", bg: "#aac561" },
  desc: { head: "DESCRIBE", bg: "#0a0ae6" },
};
const packets = [
  {
    id: 1, time: "-2.005ms",
    cells: [["addr", "0X58", 36.6], ["write", "Write", 46.3], ["aack", "A-ACK", 45.9], ["data", "0X20", 37.5], ["dack", "D-ACK", 45.4], ["data", "0X2F", 38], ["dack", "D-ACK", 45.5]],
  },
  {
    id: 2, time: "-1.1425ms",
    cells: [["addr", "0X58", 36.6], ["read", "Read", 37], ["aack", "A-ACK", 46.3], ["data", "0X00", 37], ["dack", "D-ACK", 46.3], ["data", "0X20", 36.6], ["dack", "D-ACK", 46.3], ["data", "0X07", 37], ["dnack", "D-NACK", 54.7], ["desc", "DATA NACK", 63.5]],
  },
  {
    id: 3, time: "41.44ms",
    cells: [["addr", "0X49", 36.6], ["write", "Write", 46.3], ["anack", "A-NACK", 56], ["desc", "ADDR NACK", 63.1]],
  },
  {
    id: 4, time: "62.8075ms",
    cells: [["addr", "0X7F", 36.6], ["read", "Read", 37], ["anack", "A-NACK", 55.6], ["data", "0XFF", 37], ["dnack", "D-NACK", 54.7], ["data", "0XFF", 36.6], ["dnack", "D-NACK", 56], ["desc", "DATA NACK", 63.1]],
  },
];

const Column = ({ w, head, value, bg }) => (
  <PacketCol $w={w}>
    <HeadCell $bg={bg}>{head}</HeadCell>
    <ValueCell>{value}</ValueCell>
  </PacketCol>
);

const taskIcons = [
  { w: 38, icon: <><path d="M3 5h18v3H3zM3 17h18v3H3z" fill="#aaa" /><rect x="5" y="9" width="10" height="7" fill="none" stroke="#aaa" /><path d="M18 10h3M18 14h3" stroke="#aaa" /></> },
  { w: 40, open: true, icon: <><path d="M3 4h7l2 3h9v14H3z" fill="#f4c644" /><rect x="3" y="10" width="18" height="11" fill="#ffe08a" /><rect x="8" y="14" width="8" height="7" fill="#2a9ac8" /></> },
  { icon: <><path d="M4 8h16l1 14H3z" fill="#f2f2f2" /><path d="M8 9V5a4 4 0 018 0v4" fill="none" stroke="#f2f2f2" strokeWidth="1.500" /><rect x="7" y="11" width="4.500" height="4.500" fill="#e8541c" /><rect x="12.500" y="11" width="4.500" height="4.500" fill="#7ab81c" /><rect x="7" y="16.500" width="4.500" height="4.500" fill="#1c9ae8" /><rect x="12.500" y="16.500" width="4.500" height="4.500" fill="#f4b81c" /></> },
  { icon: <><rect x="4" y="3" width="16" height="19" fill="#cfe3a0" /><rect x="4" y="3" width="16" height="4" fill="#6a8a4a" /><path d="M7 18l4-5 2 2 6-8" fill="none" stroke="#3aa03a" strokeWidth="2.500" /></> },
  { icon: <path d="M20 17c-2 4-12 6-15-1C2 8 9 2 14 3c5 1 8 6 7 11H9c0 4 7 4 10 2zM9 10h7c0-4-6-4-7 0z" fill="#1c88dc" /> },
  { icon: <><rect x="13" y="3" width="8" height="7" fill="#d8e0f0" stroke="#2848a8" /><rect x="3" y="13" width="8" height="7" fill="#d8e0f0" stroke="#2848a8" /><path d="M8 13l7-3" stroke="#e8c81c" strokeWidth="2" /></> },
  { icon: <><path d="M6 4h15l-3 17H3z" fill="#2a62c8" /><path d="M8 8l5 4-6 4M12 17h4" fill="none" stroke="#fff" strokeWidth="1.500" /></> },
  { open: true, icon: <><circle cx="12" cy="12" r="10" fill="#e03c2c" /><path d="M12 12L3.500 17A10 10 0 0012 22z" fill="#2eaa4a" /><path d="M12 12h10a10 10 0 01-10 10z" fill="#f4c81c" /><circle cx="12" cy="12" r="5" fill="#3c88e8" stroke="#fff" /></> },
  { open: true, icon: <><rect x="3" y="5" width="18" height="15" fill="#e8e8e8" /><FlagText x="12" y="17" $size={12}>7z</FlagText></> },
  { open: true, icon: <><rect x="3" y="3" width="18" height="18" fill="#c81a1a" /><path d="M6 18c3-2 5-7 5-11 1 5 3 7 7 8-4 0-8 1-12 3z" fill="none" stroke="#fff" strokeWidth="1.300" /></> },
  { open: true, icon: <><path d="M4 8l6-3v4h4V5l6 3-3 3 3 3v5l-6 2v-5h-4v5l-6-2v-5l3-3z" fill="#f0c81c" stroke="#a88810" /></> },
  { open: true, active: true, icon: <AppLogo s={22} /> },
  { open: true, icon: <><rect x="5" y="2" width="14" height="20" fill="#f2f2f2" /><rect x="7" y="4" width="10" height="4" fill="#222" /><path d="M7 10.500h2M11 10.500h2M15 10.500h2M7 14h2M11 14h2M15 14h2M7 18h2M11 18h2M15 18h2" stroke="#222" strokeWidth="2" /></> },
  { open: true, icon: <><path d="M6 6l13-3-2 18H4z" fill="#a8d8e0" /><path d="M6 6l6-1-3 16H4z" fill="#5a8c9c" /></> },
  { open: true, icon: <><path d="M3 7h5l2-3h4l2 3h5v14H3z" fill="#1c98e0" /><circle cx="12" cy="14" r="5" fill="#0a4a88" /><circle cx="12" cy="14" r="3" fill="#58c0f0" /></> },
];

const triggerTicks = [0, 1, 2, 3, 4, 5, 6, 7, 8, 9, 10];

export default function App() {
  return (
    <Page>
      <Global />
      <TitleBar>
        <AppLogo s={15} />
        <TitleText>smart+&nbsp; LAP-C(16128+) (S/N:12091Z-8863) - [LaDoc7]</TitleText>
        <Menu>
          <span>File(F)</span>
          <span>Sampling(S)</span>
          <span>Hardware(H)</span>
          <span>Data(D)</span>
          <span>Tools(T)</span>
          <span>Window(W)</span>
          <span>Help(H)</span>
        </Menu>
        <WinButtons>
          <span>–</span>
          <span>❐</span>
          <FaTimes size={10} />
        </WinButtons>
      </TitleBar>

      <Toolbar>
        <ToolSep />
        {toolIcons.map((icon, i) => (
          <ToolCell key={i}><Ico s={22}>{icon}</Ico></ToolCell>
        ))}
      </Toolbar>

      <TabBar>
        <DocTab><DocIcon />LaDoc5</DocTab>
        <DocTab><DocIcon />LaDoc6</DocTab>
        <DocTab $active><DocIcon />LaDoc7</DocTab>
        <AddTab>+</AddTab>
        <TabTools>
          <TabNavTri />
          <TabNavTri $right />
          <TabMin>–</TabMin>
          <span>❐</span>
          <FaTimes size={10} />
        </TabTools>
      </TabBar>

      <PageBar>
        <PButton>P</PButton>
        <PageChip>1</PageChip>
        <PageNav>
          <FaStepBackward size={10} />
          <FaBackward size={10} />
          <FaForward size={10} />
          <FaStepForward size={10} />
        </PageNav>
        <PageInput>1</PageInput>
        <PageTotal>/1</PageTotal>
      </PageBar>

      <Body>
        <LeftCol>
          <InfoBar>
            <div>Scale:50KHz<br />Total:163.84ms</div>
            <div>Display Pos:0ns<br />Display Range:-600us ~ 640us</div>
            <div>
              <InfoBadgeRow><InfoBadge>A Pos</InfoBadge>0ns</InfoBadgeRow>
              <InfoBadgeRow><InfoBadge>B Pos</InfoBadge>37.5us</InfoBadgeRow>
            </div>
            <div>
              <InfoBadgeRow><InfoBadge>A - T</InfoBadge>0 Hz</InfoBadgeRow>
              <InfoBadgeRow><InfoBadge>B - T</InfoBadge>26.667KHz</InfoBadgeRow>
            </div>
            <Probe>
              <ProbeSelects>
                <ProbeRow>
                  <Select $w={24} $h={12}>A<SelectArrow><FaChevronDown size={6} /></SelectArrow></Select>
                  <Select $w={24} $h={12}>0<SelectArrow><FaChevronDown size={6} /></SelectArrow></Select>
                </ProbeRow>
                <ProbeP>P<ProbeField>1</ProbeField></ProbeP>
              </ProbeSelects>
              <ProbeButtons>
                <ProbeButton><PinBtn /></ProbeButton>
                <ProbeButton><PinBtn solid /></ProbeButton>
              </ProbeButtons>
            </Probe>
          </InfoBar>

          <Scope>
            <SideCol>
              <SideHead>Bus/Signal</SideHead>
              <SideRow $bus>
                <FaPlay size={9} color="#eee" />
                BUS0(I2C)
              </SideRow>
              {channels.map((c, i) => (
                <SideRow key={c.name} $active={i === 15}>
                  <Leaf c={c.leaf} />
                  {c.name}
                  <SideDim $active={i === 15}>{c.name}</SideDim>
                </SideRow>
              ))}
            </SideCol>
            <SideSplit><SplitHandle /></SideSplit>
            <CanvasCol>
              <Waveform />
              <DottedEdge />
            </CanvasCol>
            <VScroll>
              <FaChevronUp size={6} />
              <GripLines />
              <FaChevronDown size={6} />
            </VScroll>
          </Scope>

          <HScrollRow>
            <HLeft>
              <LeftTri size={5} />
              <HGrip />
              <FaPlay size={5} />
            </HLeft>
            <HTrack>
              <HArrow><LeftTri size={5} /></HArrow>
              <HKnob />
              <HSpace />
              <HArrow><FaPlay size={5} /></HArrow>
            </HTrack>
            <HEnd />
          </HScrollRow>

          <Bottom>
            <BottomTabs>
              <BottomTab $w={67} $pr={11}>Navigator</BottomTab>
              <BottomTab $w={74} $active>Packet List</BottomTab>
              <BottomTab $w={71} $pr={18} $sep>Statistics</BottomTab>
              <BottomTab $w={97} $pr={16} $sep>Memory Analyzer</BottomTab>
              <PanelTools><span>?</span><span>–</span><span>✕</span></PanelTools>
            </BottomTabs>
            <BottomTools>
              <Ico s={15}><path d="M4 3l8 7 8-7 1 2-7 7 7 8-3 2-6-8-6 8-3-2 7-8-7-7z" fill="#2c3644" /></Ico>
              <Ico s={15}><path d="M5 10a7 7 0 0112-3l2-2v7h-7l3-3a4 4 0 00-7 1z" fill="#2a74c8" /><path d="M19 14a7 7 0 01-12 3l-2 2v-7h7l-3 3a4 4 0 007-1z" fill="#3c4854" /></Ico>
              <Ico s={15}><path d="M12 2l7 8h-4v6H9v-6H5z" fill="#2a74c8" /><path d="M3 18h18v4H3z" fill="#2c3644" /></Ico>
              <FaRandom size={14} />
            </BottomTools>
            <ListFrame>
              <PacketList>
                {packets.map((p) => (
                  <PacketRow key={p.id}>
                    <PacketTable>
                      <Column w={57.300} bg={LEFT_HEAD} head="Packet #" value={p.id} />
                      <Column w={63.200} bg={LEFT_HEAD} head="Name" value="BUS0(I2C)" />
                      <Column w={63.100} bg={LEFT_HEAD} head="TimeStamp" value={p.time} />
                    </PacketTable>
                    <PacketTable>
                      {p.cells.map(([k, v, w], i) => (
                        <Column key={i} w={w} bg={kinds[k].bg} head={kinds[k].head} value={v} />
                      ))}
                    </PacketTable>
                  </PacketRow>
                ))}
                <RowFlag />
              </PacketList>
              <ListScroll>
                <ListThumb>
                  <FaChevronUp size={6} />
                  <GripLines />
                </ListThumb>
                <ListTrack />
                <ListEnd><FaChevronDown size={6} /></ListEnd>
              </ListScroll>
            </ListFrame>
          </Bottom>
        </LeftCol>

        <RightPanel>
          <PanelGrip />
          <PanelHead>
            <Ico s={9}><path d="M14 2l8 8-5 2-4 5-2-2-7 7 6-8-2-2 5-4z" fill="#ddd" /></Ico>
            <FaTimes size={10} />
          </PanelHead>
          <SectionTitle $mt={2} $h={11}>Zoom</SectionTitle>
          <ZoomRow>
            <Select $w={81}>20us<SelectArrow><FaChevronDown size={6} /></SelectArrow></Select>
            <ZoomLens plus />
            <ZoomLens />
          </ZoomRow>
          <SectionTitle $mt={5}>RAM Size</SectionTitle>
          <RamBox>
            <RamBadge>64K</RamBadge>
            {Array.from({ length: 18 }, (_, i) => <RamBar key={i} $on={i < 4} />)}
          </RamBox>
          <SectionTitle $mt={4} $h={11}>
            Internal Clock
            <TitleArrow><FaForward size={7} /></TitleArrow>
          </SectionTitle>
          <KnobWrap><Knob /></KnobWrap>
          <KnobLabels><span>100Hz</span><span>200MHz</span></KnobLabels>
          <ClockSelect>
            <Select $w={96}>400KHz<SelectArrow><FaChevronDown size={6} /></SelectArrow></Select>
          </ClockSelect>
          <SectionTitle $mt={7}>Trigger Position</SectionTitle>
          <TriggerBar>
            {triggerTicks.map((t) => <TriggerTick key={t} />)}
            <TriggerMark />
            <TriggerPct>%</TriggerPct>
          </TriggerBar>
          <TriggerScale>
            {triggerTicks.map((t) => <TriggerNum key={t} $hot={t === 1}>{t * 10}</TriggerNum>)}
          </TriggerScale>
          <WheelWrap><Wheel /></WheelWrap>
        </RightPanel>
      </Body>

      <StatusBar>
        Connected
        <Progress />
        <ReadyBox>Ready</ReadyBox>
      </StatusBar>

      <Taskbar>
        <StartButton><FaWindows size={15} /></StartButton>
        <SearchBox>
          <SearchRing />
          Type here to search
          <SearchMic><FaMicrophone size={12} /></SearchMic>
        </SearchBox>
        {taskIcons.map((t, i) => (
          <TaskIcon key={i} $w={t.w} $open={t.open} $active={t.active}>
            <Ico s={21}>{t.icon}</Ico>
          </TaskIcon>
        ))}
        <Tray>
          <TrayPerson>
            <Ico s={14}><circle cx="9" cy="9" r="3.500" fill="none" stroke="#ddd" strokeWidth="1.500" /><path d="M3 20c0-8 11-8 11 0" fill="none" stroke="#ddd" strokeWidth="1.500" /><circle cx="17" cy="6" r="3" fill="none" stroke="#ddd" strokeWidth="1.500" /></Ico>
          </TrayPerson>
          <FaChevronUp size={9} />
          <FaDropbox size={12} />
          <Ico s={14}><path d="M4 20c-3-4 2-7 4-5s-1 6-3 5M8 15L18 3c2-1 4 1 2 3L10 18" fill="none" stroke="#ddd" strokeWidth="1.500" /></Ico>
          <Clock>2:39 PM<br />15-Jan-19</Clock>
          <Ico s={18}>
            <path d="M3 3h18v14H11l-4 4v-4H3z" fill="#e8e8e8" />
            <path d="M6 7h12M6 10h12M6 13h8" stroke="#0b1720" />
            <circle cx="17" cy="17" r="5.500" fill="#3a3a3a" stroke="#777" />
            <FlagText x="17" y="20" $fill="#eee" $size={9}>2</FlagText>
          </Ico>
        </Tray>
      </Taskbar>
    </Page>
  );
}
